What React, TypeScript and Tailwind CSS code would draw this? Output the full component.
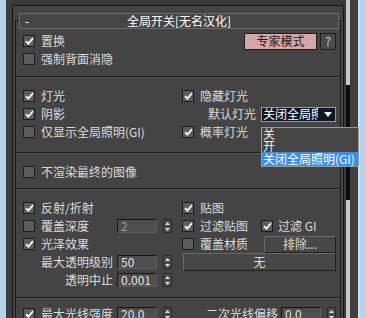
import clsx from 'clsx';

function Check({ on = false }: { on?: boolean }) {
  return (
    <span className="w-[12px] h-[12px] shrink-0 flex items-center justify-center border border-[#1c1c1c] bg-[#5c5c5c]">
      {on && (
        <svg width="9" height="8" viewBox="0 0 9 8">
          <path d="M1 4.2 3.4 6.5 8 1.2" stroke="#f2f2f2" strokeWidth="1.9" fill="none" />
        </svg>
      )}
    </span>
  );
}

function CheckRow({ on, label }: { on?: boolean; label: string }) {
  return (
    <div className="h-[18px] flex items-center gap-[6px]">
      <Check on={on} />
      <span className="leading-none">{label}</span>
    </div>
  );
}

function Spin() {
  return (
    <span className="w-[9px] h-[14px] shrink-0 flex flex-col items-center justify-center gap-[3px] border border-[#2a2a2a] bg-[#4a4a4a]">
      <svg width="5" height="3" viewBox="0 0 5 3">
        <path d="M0 3h5L2.5 0z" fill="#dedede" />
      </svg>
      <svg width="5" height="3" viewBox="0 0 5 3">
        <path d="M0 0h5L2.5 3z" fill="#dedede" />
      </svg>
    </span>
  );
}

function Field({ value, dim = false }: { value: string; dim?: boolean }) {
  return (
    <div className="flex items-center gap-[6px]">
      <span
        className={clsx(
          'w-[40px] h-[14px] flex items-center pl-[3px] leading-none bg-[#4e4e4e] border border-t-[#151515] border-l-[#151515] border-r-[#5e5e5e] border-b-[#5e5e5e]',
          dim ? 'text-[#9c9c9c]' : 'text-[#e2e2e2]'
        )}
      >
        {value}
      </span>
      <Spin />
    </div>
  );
}

function Sep() {
  return <div className="h-[2px] border-t border-[#1a1a1a] bg-[#575757]" />;
}

function Btn({ children, className }: { children: React.ReactNode; className?: string }) {
  return (
    <span
      className={clsx(
        'flex items-center justify-center leading-none border border-t-[#6a6a6a] border-l-[#6a6a6a] border-r-[#1e1e1e] border-b-[#1e1e1e] bg-[#474747]',
        className
      )}
    >
      {children}
    </span>
  );
}

export default function App() {
  return (
    <div className="relative w-[366px] h-[318px] overflow-hidden flex bg-[#3d3d3d] text-[12px] text-[#dcdcdc] font-['Noto_Sans_CJK_SC',sans-serif]">
      <div className="w-[6px] shrink-0 bg-[#b9d1ea]" />
      <div className="w-[6px] shrink-0 bg-[#3e3e3e]" />

      <div className="w-[332px] shrink-0 flex flex-col">
        <div className="h-[5px] shrink-0 bg-[#393939]" />
        <div className="flex-1 flex flex-col bg-[#444444] border-t border-l border-r border-[#161616] px-[2px]">
          <div className="mt-[14px] flex-1 border-t border-l border-r border-[#1a1a1a]">
            {/* rollout title */}
            <div className="-mt-[8px] ml-[3px] mr-[1px] h-[16px] grid grid-cols-[1fr_auto_1fr] items-center border border-[#6c6c6c] bg-[#454545] text-white leading-none">
              <span className="pl-[5px]">-</span>
              <span>全局开关[无名汉化]</span>
              <span />
            </div>

            {/* section 1 */}
            <div className="pt-[3px] pb-[8px] pl-[7px] flex">
              <div className="w-[159px] shrink-0">
                <CheckRow on label="置换" />
                <CheckRow label="强制背面消隐" />
              </div>
              <div className="flex-1 pr-[4px]">
                <div className="h-[18px] flex items-center justify-end gap-[3px]">
                  <span className="w-[73px] h-[17px] flex items-center justify-center leading-none border border-[#1e1e1e] bg-[#d6a7a9] text-[#1c1c1c]">
                    专家模式
                  </span>
                  <span className="w-[16px] h-[17px] flex items-center justify-center leading-none border border-[#1e1e1e] bg-[#4b4b4b] text-[#cfcfcf]">
                    ?
                  </span>
                </div>
              </div>
            </div>
            <Sep />

            {/* section 2 */}
            <div className="pt-[9px] pb-[11px] pl-[7px] flex">
              <div className="w-[159px] shrink-0">
                <CheckRow on label="灯光" />
                <CheckRow on label="阴影" />
                <CheckRow label="仅显示全局照明(GI)" />
              </div>
              <div className="flex-1 pr-[4px]">
                <CheckRow on label="隐藏灯光" />
                <div className="h-[18px] flex items-center justify-end gap-[5px]">
                  <span className="leading-none">默认灯光</span>
                  <span className="w-[75px] h-[15px] flex items-center border border-[#7d9ec2] bg-[#0e1824] text-white leading-none pl-[1px]">
                    <span className="w-[55px] overflow-hidden whitespace-nowrap">关闭全局照明</span>
                    <svg width="8" height="5" viewBox="0 0 8 5" className="ml-[6px]">
                      <path d="M0 0h8L4 5z" fill="#f0f0f0" />
                    </svg>
                  </span>
                </div>
                <CheckRow on label="概率灯光" />
              </div>
            </div>
            <Sep />

            {/* section 3 */}
            <div className="pt-[9px] pb-[7px] pl-[7px]">
              <CheckRow label="不渲染最终的图像" />
            </div>
            <Sep />

            {/* section 4 */}
            <div className="pt-[9px] pb-[8px] pl-[7px] flex">
              <div className="w-[159px] shrink-0">
                <CheckRow on label="反射/折射" />
                <div className="h-[18px] flex items-center">
                  <div className="w-[94px] flex items-center gap-[6px]">
                    <Check />
                    <span className="leading-none">覆盖深度</span>
                  </div>
                  <Field value="2" dim />
                </div>
                <CheckRow on label="光泽效果" />
                <div className="h-[18px] flex items-center">
                  <span className="w-[90px] mr-[4px] text-right leading-none">最大透明级别</span>
                  <Field value="50" />
                </div>
                <div className="h-[18px] flex items-center">
                  <span className="w-[90px] mr-[4px] text-right leading-none">透明中止</span>
                  <Field value="0.001" />
                </div>
              </div>
              <div className="flex-1 pr-[4px]">
                <CheckRow on label="贴图" />
                <div className="h-[18px] flex items-center">
                  <div className="w-[79px] flex items-center gap-[6px]">
                    <Check on />
                    <span className="leading-none">过滤贴图</span>
                  </div>
                  <div className="flex items-center gap-[5px]">
                    <Check on />
                    <span className="leading-none">过滤 GI</span>
                  </div>
                </div>
                <div className="h-[18px] flex items-center">
                  <div className="flex items-center gap-[6px]">
                    <Check />
                    <span className="leading-none">覆盖材质</span>
                  </div>
                  <Btn className="ml-auto w-[72px] h-[17px]">排除...</Btn>
                </div>
                <div className="h-[18px] flex items-center pl-[1px]">
                  <Btn className="flex-1 h-[18px]">无</Btn>
                </div>
                <div className="h-[18px]" />
              </div>
            </div>
            <Sep />

            {/* section 5 */}
            <div className="pt-[6px] pl-[7px] flex">
              <div className="w-[159px] shrink-0">
                <div className="h-[18px] flex items-center">
                  <div className="w-[94px] flex items-center gap-[6px]">
                    <Check on />
                    <span className="leading-none">最大光线强度</span>
                  </div>
                  <Field value="20.0" />
                </div>
              </div>
              <div className="flex-1 pr-[4px]">
                <div className="h-[18px] flex items-center justify-end gap-[3px]">
                  <span className="leading-none">二次光线偏移</span>
                  <Field value="0.0" />
                </div>
              </div>
            </div>
          </div>
        </div>
      </div>

      {/* scrollbar strip */}
      <div className="w-[2px] shrink-0 bg-[#3a3a3a]" />
      <div className="w-[4px] shrink-0 flex flex-col">
        <div className="h-[85px] bg-[#c9c9c9]" />
        <div className="h-[115px] bg-[#0c0c0c]" />
        <div className="flex-1 bg-[#c9c9c9]" />
      </div>
      <div className="w-[8px] shrink-0 bg-[#3f3f3f]" />
      <div className="w-[2px] shrink-0 bg-[#d2deec]" />
      <div className="w-[6px] shrink-0 bg-[#b9d1ea]" />

      {/* open dropdown list */}
      <div className="absolute left-[261px] top-[127px] w-[98px] flex flex-col border border-[#9a9a9a] bg-[#454545] text-[#f0f0f0] leading-none">
        <span className="h-[12px] pl-[1px] flex items-center">关</span>
        <span className="h-[12px] pl-[1px] flex items-center">开</span>
        <span className="h-[14px] pl-[1px] flex items-center bg-[#3a8ee8] text-white">关闭全局照明(GI)</span>
      </div>
    </div>
  );
}
